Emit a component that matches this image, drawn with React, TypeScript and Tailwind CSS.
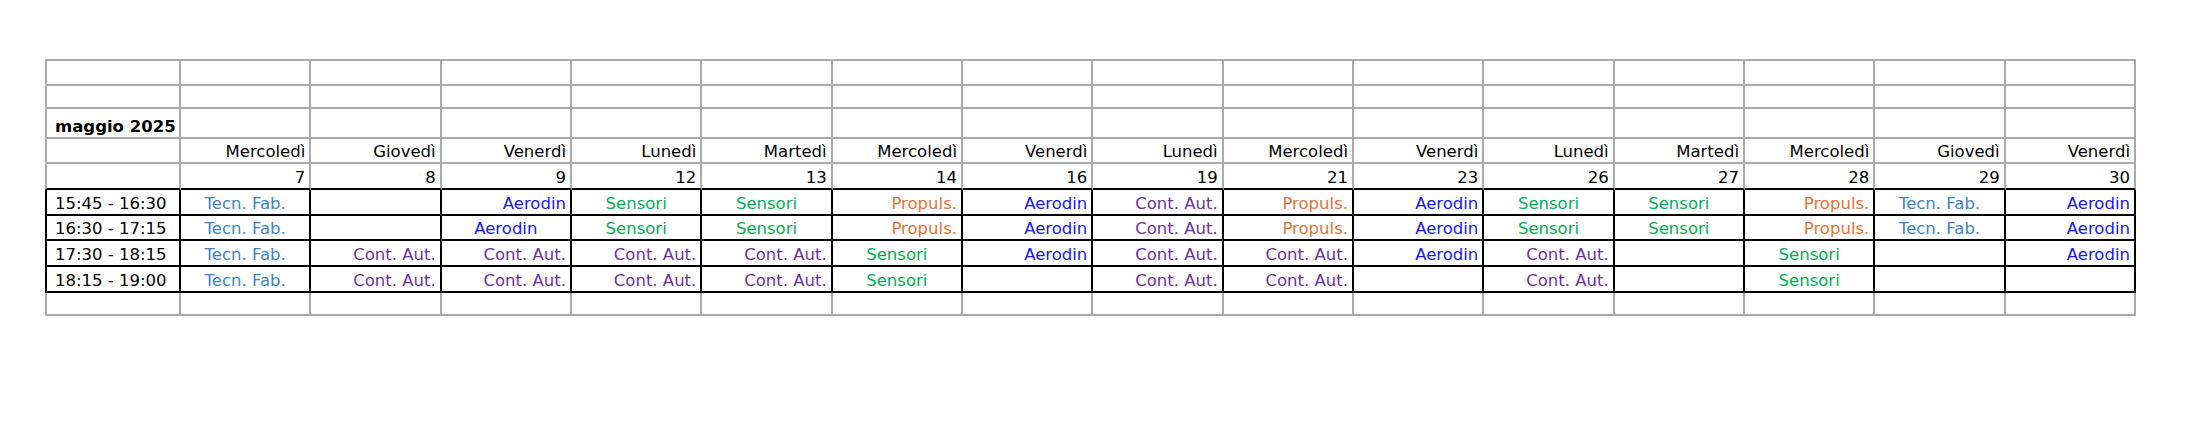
type Align = "left" | "center" | "right";
type Entry = { text: string; color: string; align: Align } | null;

const days: [string, number][] = [
  ["Mercoledì", 7],
  ["Giovedì", 8],
  ["Venerdì", 9],
  ["Lunedì", 12],
  ["Martedì", 13],
  ["Mercoledì", 14],
  ["Venerdì", 16],
  ["Lunedì", 19],
  ["Mercoledì", 21],
  ["Venerdì", 23],
  ["Lunedì", 26],
  ["Martedì", 27],
  ["Mercoledì", 28],
  ["Giovedì", 29],
  ["Venerdì", 30],
];

const T: Entry = { text: "Tecn. Fab.", color: "text-[#3a86c8]", align: "center" };
const C: Entry = { text: "Cont. Aut.", color: "text-[#7030a0]", align: "right" };
const A: Entry = { text: "Aerodin", color: "text-[#1515ff]", align: "right" };
const Ac: Entry = { text: "Aerodin", color: "text-[#1515ff]", align: "center" };
const S: Entry = { text: "Sensori", color: "text-[#00b050]", align: "center" };
const P: Entry = { text: "Propuls.", color: "text-[#e97132]", align: "right" };
const _: Entry = null;

const lessons: [string, Entry[]][] = [
  ["15:45 - 16:30", [T, _, A, S, S, P, A, C, P, A, S, S, P, T, A]],
  ["16:30 - 17:15", [T, _, Ac, S, S, P, A, C, P, A, S, S, P, T, A]],
  ["17:30 - 18:15", [T, C, C, C, C, S, A, C, C, A, C, _, S, _, A]],
  ["18:15 - 19:00", [T, C, C, C, C, S, _, C, C, _, C, _, S, _, _]],
];

const justify = (a: Align) =>
  a === "center" ? "justify-center" : a === "right" ? "justify-end pr-1" : "justify-start pl-2";

function Cell({
  children,
  first,
  top,
  dark,
  darkBottom,
  align = "left",
  className = "",
}: {
  children?: React.ReactNode;
  first?: boolean;
  top?: boolean;
  dark?: boolean;
  darkBottom?: boolean;
  align?: Align;
  className?: string;
}) {
  return (
    <div
      className={`flex items-end overflow-visible whitespace-nowrap border-r-2 border-b-2 pb-px leading-[18px] ${justify(align)} ${
        dark ? "border-r-black" : "border-r-[#aaaaaa]"
      } ${dark || darkBottom ? "border-b-black" : "border-b-[#aaaaaa]"} ${
        first ? (dark ? "border-l-2 border-l-black" : "border-l-2 border-l-[#aaaaaa]") : ""
      } ${top ? "border-t-2 border-t-[#aaaaaa]" : ""} ${className}`}
    >
      {children}
    </div>
  );
}

export default function App() {
  const cols = Array.from({ length: 15 }, (_, i) => i);

  return (
    <main className="w-full h-[440px] bg-white pt-[59px] pl-[45px] text-[16.5px] text-black font-['DejaVu_Sans',sans-serif]">
      <div className="w-[2091px] grid grid-cols-[136px_repeat(15,minmax(0,1fr))] grid-rows-[27px_23px_30px_25px_26px_26px_25px_26px_26px_23px]">
        {/* two empty rows */}
        <Cell first top />
        {cols.map(i => <Cell key={`a${i}`} top />)}
        <Cell first />
        {cols.map(i => <Cell key={`b${i}`} />)}

        {/* month */}
        <Cell first className="font-bold">maggio 2025</Cell>
        {cols.map(i => <Cell key={`c${i}`} />)}

        {/* weekdays */}
        <Cell first />
        {days.map(([d], i) => (
          <Cell key={`d${i}`} align="right">{d}</Cell>
        ))}

        {/* day numbers */}
        <Cell first darkBottom />
        {days.map(([, n], i) => (
          <Cell key={`n${i}`} align="right" darkBottom>{n}</Cell>
        ))}

        {/* lessons */}
        {lessons.map(([time, row], r) => (
          <>
            <Cell key={`t${r}`} first dark className="pb-[2px]">{time}</Cell>
            {row.map((e, i) => (
              <Cell
                key={`l${r}-${i}`}
                dark
                align={e ? e.align : "left"}
                className={`pb-[2px] ${e ? e.color : ""}`}
              >
                {e ? e.text : ""}
              </Cell>
            ))}
          </>
        ))}

        {/* empty trailing row */}
        <Cell first />
        {cols.map(i => <Cell key={`z${i}`} />)}
      </div>
    </main>
  );
}
